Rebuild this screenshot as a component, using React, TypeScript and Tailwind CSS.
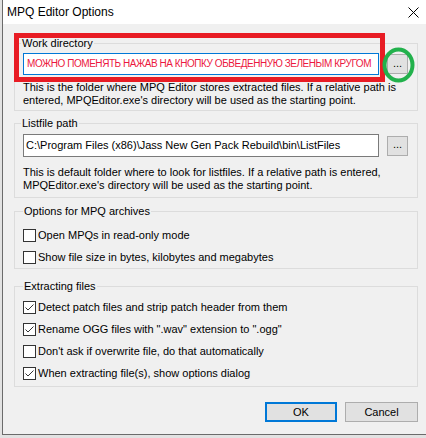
import React from "react";

const font = { fontFamily: '"Liberation Sans", Arial, sans-serif' };

function Check({ checked }: { checked: boolean }) {
  return (
    <span className="w-[13px] h-[13px] border border-[#333333] bg-white flex items-center justify-center shrink-0">
      {checked && (
        <svg width="11" height="11" viewBox="0 0 11 11">
          <polyline points="1.5,5.5 4,8 9.5,2.5" fill="none" stroke="#333333" strokeWidth="1" />
        </svg>
      )}
    </span>
  );
}

function Row({ checked, label }: { checked: boolean; label: string }) {
  return (
    <div className="h-[22px] flex items-center gap-[2px]">
      <Check checked={checked} />
      <span className="text-[11px] leading-[13px] text-black whitespace-nowrap">{label}</span>
    </div>
  );
}

function Group({
  label,
  labelLeft,
  className,
  children,
}: {
  label: string;
  labelLeft: string;
  className: string;
  children: React.ReactNode;
}) {
  return (
    <div className={`relative w-[404px] border border-[#dcdcdc] pl-[8px] ${className}`}>
      <span
        className={`absolute top-[-7px] ${labelLeft} bg-[#f0f0f0] px-[1px] text-[11px] leading-[13px] text-black whitespace-nowrap`}
      >
        {label}
      </span>
      {children}
    </div>
  );
}

function DotsButton() {
  return (
    <div className="w-[21px] h-[20px] shrink-0 border border-[#adadad] bg-[#e1e1e1] flex items-center justify-center text-[11px] leading-[11px] text-black">
      <span className="-mt-[2px]">...</span>
    </div>
  );
}

export default function App() {
  return (
    <div className="w-[426px] h-[438px] bg-[#e2e2e2] overflow-hidden relative" style={font}>
      <div className="ml-[2px] w-[424px] h-[435px] border-l border-b border-[#6b6b6b] bg-[#f0f0f0] flex flex-col">
        {/* title bar */}
        <div className="h-[24px] bg-white flex items-center justify-between pl-[4px] pr-[7px] shrink-0">
          <span className="text-[12px] leading-[14px] text-black">MPQ Editor Options</span>
          <svg width="11" height="11" viewBox="0 0 11 11">
            <line x1="0.5" y1="0.5" x2="10.5" y2="10.5" stroke="#000" strokeWidth="1" />
            <line x1="10.5" y1="0.5" x2="0.5" y2="10.5" stroke="#000" strokeWidth="1" />
          </svg>
        </div>

        <div className="pl-[11px] flex flex-col">
          {/* Work directory */}
          <Group label="Work directory" labelLeft="left-[6px]" className="mt-[19px] pt-[9px] pb-[3px]">
            <div className="flex items-center gap-[8px]">
              <div className="w-[356px] h-[22px] shrink-0 overflow-hidden border border-[#0078d7] bg-white flex items-center pl-[3px]">
                <span className="text-[10px] leading-[12px] tracking-[-0.45px] text-[#ec1840] whitespace-nowrap">
                  МОЖНО ПОМЕНЯТЬ НАЖАВ НА КНОПКУ ОБВЕДЕННУЮ ЗЕЛЕНЫМ КРУГОМ
                </span>
              </div>
              <DotsButton />
            </div>
            <p className="mt-[6px] text-[11px] leading-[13px] text-black whitespace-nowrap">
              This is the folder where MPQ Editor stores extracted files. If a relative path is
              <br />
              entered, MPQEditor.exe's directory will be used as the starting point.
            </p>
          </Group>

          {/* Listfile path */}
          <Group label="Listfile path" labelLeft="left-[6px]" className="mt-[12px] pt-[10px] pb-[5px]">
            <div className="flex items-center gap-[8px]">
              <div className="w-[356px] h-[23px] shrink-0 overflow-hidden border border-[#7a7a7a] bg-white flex items-center pl-[2px]">
                <span className="text-[11px] leading-[13px] text-black whitespace-nowrap">
                  C:\Program Files (x86)\Jass New Gen Pack Rebuild\bin\ListFiles
                </span>
              </div>
              <DotsButton />
            </div>
            <p className="mt-[9px] text-[11px] leading-[13px] text-black whitespace-nowrap">
              This is default folder where to look for listfiles. If a relative path is entered,
              <br />
              MPQEditor.exe's directory will be used as the starting point.
            </p>
          </Group>

          {/* Options */}
          <Group label=" Options for MPQ archives" labelLeft="left-[8px]" className="mt-[13px] pt-[12px]">
            <Row checked={false} label="Open MPQs in read-only mode" />
            <Row checked={false} label="Show file size in bytes, kilobytes and megabytes" />
          </Group>

          {/* Extracting */}
          <Group label="Extracting files" labelLeft="left-[8px]" className="mt-[17px] pt-[9px] pb-[2px]">
            <Row checked={true} label="Detect patch files and strip patch header from them" />
            <Row checked={true} label={'Rename OGG files with ".wav" extension to ".ogg"'} />
            <Row checked={false} label="Don't ask if overwrite file, do that automatically" />
            <Row checked={true} label="When extracting file(s), show options dialog" />
          </Group>
        </div>

        {/* buttons */}
        <div className="mt-[15px] flex justify-end gap-[8px] pr-[8px]">
          <div className="w-[72px] h-[20px] border-2 border-[#0078d7] bg-[#e1e1e1] flex items-center justify-center text-[11px] text-black">
            OK
          </div>
          <div className="w-[73px] h-[20px] border border-[#adadad] bg-[#e1e1e1] flex items-center justify-center text-[11px] text-black">
            Cancel
          </div>
        </div>
      </div>

      {/* annotation overlays */}
      <div className="absolute left-[14px] top-[33px] w-[371px] h-[49px] border-[5px] border-[#e81c24] pointer-events-none" />
      <svg className="absolute left-[382px] top-[47px] pointer-events-none" width="33" height="36" viewBox="0 0 33 36">
        <ellipse cx="16.5" cy="18" rx="14" ry="15.5" fill="none" stroke="#22b14c" strokeWidth="4" />
      </svg>
    </div>
  );
}
